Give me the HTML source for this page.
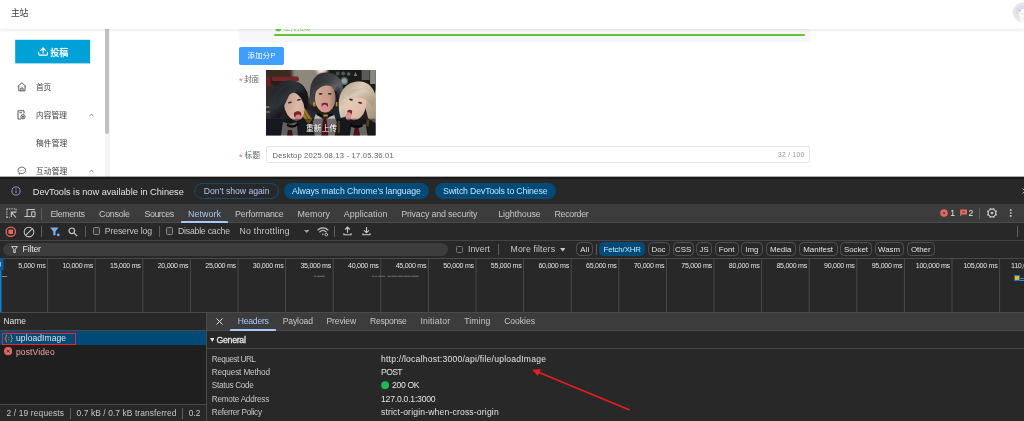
<!DOCTYPE html>
<html lang="zh-CN"><head><meta charset="utf-8"><title>主站</title>
<style>
html,body{margin:0;padding:0;}
body{width:1024px;height:421px;overflow:hidden;background:#fff;position:relative;font-family:'Liberation Sans','Noto Sans CJK SC',sans-serif;-webkit-font-smoothing:antialiased;}
#root{position:absolute;left:0;top:0;width:1024px;height:421px;overflow:hidden;will-change:transform;filter:blur(0.3px);}
#root div,#root svg{position:absolute;box-sizing:border-box;}
#root span.t{position:absolute;white-space:pre;line-height:12px;height:12px;display:block;}
</style></head><body><div id="root">
<div style="left:239px;top:20px;width:571px;height:22px;background:#f5f7fa;border-radius:0 0 3px 3px;"></div>
<div style="left:274px;top:34.2px;width:530.5px;height:1.8px;background:#67c23a;border-radius:1px;"></div>
<svg style="left:274.800px;top:24.800px" width="10" height="8" viewBox="0 0 10 8"><circle cx="3.300" cy="3.200" r="3.100" fill="#67c23a"/></svg>
<div style="left:239px;top:47px;width:44.7px;height:18px;background:#409eff;border-radius:2px;"></div>
<svg style="left:266.2px;top:70.3px" width="109.6" height="65.4" viewBox="0 0 110 65.4" preserveAspectRatio="none">
<defs>
<filter id="b1" x="-20%" y="-20%" width="140%" height="140%"><feGaussianBlur stdDeviation="0.7"/></filter>
<filter id="b2" x="-20%" y="-20%" width="140%" height="140%"><feGaussianBlur stdDeviation="0.4"/></filter>
<filter id="b3" x="-20%" y="-20%" width="140%" height="140%"><feGaussianBlur stdDeviation="1.6"/></filter>
<linearGradient id="hairL" x1="0" x2="1" y1="0" y2="1"><stop offset="0" stop-color="#1d2023"/><stop offset=".4" stop-color="#2e3438"/><stop offset=".6" stop-color="#15171a"/><stop offset="1" stop-color="#0f1012"/></linearGradient>
<linearGradient id="hairM" x1="0" x2="1" y1="0" y2="1"><stop offset="0" stop-color="#242428"/><stop offset=".4" stop-color="#404146"/><stop offset=".6" stop-color="#5f6066"/><stop offset=".8" stop-color="#36363b"/><stop offset="1" stop-color="#232327"/></linearGradient>
<linearGradient id="hairR" x1="0" x2="1" y1="0" y2="1"><stop offset="0" stop-color="#a8967e"/><stop offset=".35" stop-color="#d9cbb6"/><stop offset=".6" stop-color="#c4b199"/><stop offset="1" stop-color="#9c8a72"/></linearGradient>
<linearGradient id="skinL" x1="0" x2="1" y1="0" y2="1"><stop offset="0" stop-color="#b89484"/><stop offset=".6" stop-color="#dcb9a8"/><stop offset="1" stop-color="#c79f8f"/></linearGradient>
<linearGradient id="skinM" x1="0" x2="1" y1="0" y2="0"><stop offset="0" stop-color="#d4ab97"/><stop offset=".7" stop-color="#c59a86"/><stop offset="1" stop-color="#9a7566"/></linearGradient>
<linearGradient id="skinR" x1="0" x2="1" y1="0" y2="1"><stop offset="0" stop-color="#e9cdbd"/><stop offset=".7" stop-color="#e2bfac"/><stop offset="1" stop-color="#c9a48f"/></linearGradient>
<clipPath id="cc"><rect x="0" y="0" width="110" height="65.4"/></clipPath>
</defs>
<g clip-path="url(#cc)">
<rect width="110" height="65.4" fill="#241f1c"/>
<g filter="url(#b3)">
 <rect x="26" y="-3" width="28" height="30" fill="#8e877c"/>
 <rect x="-3" y="-3" width="30" height="12" fill="#3a2922"/>
 <rect x="-3" y="12" width="12" height="40" fill="#332c27"/>
 <rect x="60" y="-3" width="52" height="24" fill="#1d1a19"/>
 <ellipse cx="56" cy="0" rx="5" ry="4" fill="#f4ece2"/>
 <rect x="44" y="20" width="12" height="14" fill="#6d665c"/>
</g>
<g filter="url(#b1)">
 <!-- background props -->
 <rect x="6" y="6.500" width="27" height="5" rx="2" fill="#73262b"/>
 <rect x="-2" y="7" width="6.500" height="9" rx="2" fill="#6a2328"/>
 <rect x="6" y="11.500" width="24" height="3" fill="#2a1a18"/>
 <rect x="0" y="36" width="9" height="2" fill="#77726a"/><rect x="0" y="41" width="7" height="2" fill="#6a655e"/>
 <circle cx="78.500" cy="11" r="3.900" fill="#55666a"/><circle cx="78.500" cy="11" r="2.600" fill="#8fa0a2"/>
 <circle cx="72" cy="3.500" r="2" fill="#3e5054"/><circle cx="77.500" cy="3.500" r="2" fill="#4a5a5c"/><circle cx="83" cy="4" r="1.800" fill="#5a6264"/>
 <path d="M88 6l1.800-4 1.800 4z" fill="#7a7570"/>
 <rect x="96" y="-2" width="8" height="12" fill="#5b5a57"/><rect x="104.500" y="-2" width="6" height="16" fill="#8a8781"/>
 <!-- uniforms -->
 <path d="M-2 66V49C5 44 14 45 22 50l10 4 6-16 10 3 10.500 7 10.500-7 9-4 4 10 6 6c8-6 18-6 26-1V66z" fill="#262932"/>
 <path d="M68 38l8-2 3 12-6 6z" fill="#1f2633"/>
 <path d="M38 36.500l8.500 13-4 5L34 42z" fill="#a07c2c"/>
 <path d="M39.500 39l5.500 9M37.500 41l5.500 9" stroke="#5e4716" stroke-width=".9" fill="none"/>
 <path d="M72 51h2.200v12H72z" fill="#8a6d28"/><path d="M101 49l3 1-1 7-2.500-1z" fill="#8a6d28"/>
 <path d="M50 44l9 6.500 9-6.500 3 8-2 14H49l-2-14z" fill="#bcb9b6"/>
 <path d="M57 50h4l1.500 16h-7z" fill="#7d1f2a"/>
 <path d="M17 52l7 2 7-2 1 14H15z" fill="#a9a7a5"/>
 <path d="M22 60h4l1 6h-6z" fill="#6d1c26"/>
 <path d="M86 54l7 2 7-2 2 12H84z" fill="#b3b1af"/>
 <path d="M89 58h4l1.500 8h-7z" fill="#7d1f2a"/>
 <!-- left woman -->
 <path d="M5 48C0 30 6 12 22 10.500 35 9.500 43 18 42 31l-.5 9-3.500-2-5-12-14 3-5 19z" fill="url(#hairL)"/>
 <ellipse cx="28.300" cy="36.500" rx="9.800" ry="14.500" transform="rotate(-18 28.300 36.500)" fill="url(#skinL)"/>
 <path d="M9 38C7 18 30 7 41.500 22l.8 8c-4-8-11-11-19-5l-9 19z" fill="url(#hairL)"/>
 <path d="M28 43c2-2 5-2.500 7-.5 1 2 .5 4-1 5.500-2.500 1-5 0-6-2z" fill="#7a232e"/>
 <ellipse cx="32.300" cy="47.300" rx="2.900" ry="2.900" fill="#d98893"/>
 <path d="M21 53.500q6 4 11-1l.5 2.500q-6 5-11.500 1z" fill="#0c0c0e"/>
 <!-- middle woman -->
 <path d="M45.500 33C41 14 49 2.500 60 2.500c13 0 20.500 10 17 30l-2.500 8.500-3.500-20-16-4-5 20z" fill="url(#hairM)"/>
 <ellipse cx="59.500" cy="28" rx="10.300" ry="14.500" fill="url(#skinM)"/>
 <path d="M46.500 24C47 8 68 4 74.500 20l-1 6C69 13.500 57 11.500 49 23z" fill="url(#hairM)"/><path d="M70 21q5 4 5 18l-3-1z" fill="#1c1c20"/>
 <path d="M56 33.500q3-1.500 6 0l.3 3h-6.600z" fill="#6e2029"/>
 <ellipse cx="58.800" cy="38" rx="2.700" ry="3.600" fill="#dc8b97"/>
 <rect x="47.300" y="32" width="1.800" height="4.500" rx=".8" fill="#b68f30"/><rect x="70" y="32" width="1.800" height="4.500" rx=".8" fill="#b68f30"/>
 <path d="M51 43q8.500 3 17 0v2.200q-8.500 3-17 0z" fill="#0c0c0e"/>
 <rect x="57.500" y="44.500" width="4.500" height="2" fill="#b68f30"/>
 <!-- right woman -->
 <path d="M75 48C68 24 80 10 95 11.500c13 1.500 19 14 15.500 42l-8-5-6-24-14 4-2 18z" fill="url(#hairR)"/>
 <ellipse cx="90" cy="36" rx="10.300" ry="14.500" transform="rotate(14 90 36)" fill="url(#skinR)"/>
 <path d="M77 34c1-18 26-21 33-5l-3 8c-5-9-16-12-25-6z" fill="url(#hairR)"/>
 <path d="M81.500 41c1.500-1.500 4-1.500 5 0l-.5 3.500h-4z" fill="#7a2630"/>
 <ellipse cx="82.800" cy="46.300" rx="2.700" ry="4" transform="rotate(8 82.800 46.300)" fill="#df8f9b"/>
 <path d="M85 53.500q6 3 12 1v2q-6 3-12 0z" fill="#0c0c0e"/>
</g>
<g filter="url(#b2)" fill="#33282a">
 <ellipse cx="24" cy="32.500" rx="2.100" ry=".9" transform="rotate(-16 24 32.500)"/><ellipse cx="33" cy="29.800" rx="1.900" ry=".9" transform="rotate(-16 33 29.800)"/>
 <ellipse cx="54.800" cy="23.800" rx="2" ry=".9"/><ellipse cx="64" cy="23.800" rx="2" ry=".9"/>
 <ellipse cx="85.300" cy="29.600" rx="2" ry=".9" transform="rotate(14 85.300 29.600)"/><ellipse cx="94.500" cy="32.800" rx="2" ry=".9" transform="rotate(14 94.500 32.800)"/>
</g>
<rect x="0" y="48.700" width="110" height="16.700" fill="#000" fill-opacity=".42"/>
</g>
</svg>
<div style="left:266px;top:146px;width:543.5px;height:17.4px;background:#ffffff;border:1px solid #e2e5ea;border-radius:2px;"></div>
<svg style="left:15px;top:39px" width="76" height="26" viewBox="0 0 76 26"><rect x=".2" y=".8" width="74.900" height="23.600" fill="#00a1d6"/></svg>
<svg style="left:37.700px;top:47.200px" width="10.200" height="9" viewBox="0 0 10.200 9" fill="none" stroke="#fff" stroke-width="1.150" stroke-linecap="round" stroke-linejoin="round"><path d="M5.100 6V1.100M2.700 3.300l2.400-2.400 2.400 2.400M.7 5.400v1.700q0 1.100 1.100 1.100h6.600q1.100 0 1.100-1.100V5.400"/></svg>
<div style="left:105px;top:29px;width:5px;height:148px;background:#f5f5f5;"></div>
<div style="left:105.4px;top:29px;width:4px;height:104.5px;background:#c1c1c1;border-radius:0 0 2px 2px;"></div>
<svg style="left:16.600px;top:81.800px" width="9.800" height="9.800" viewBox="0 0 9.800 9.800" fill="none" stroke="#3c3e42" stroke-width=".85" stroke-linejoin="round"><path d="M.6 4.700 4.900.8l4.300 3.900M1.800 4.100v4.700h6.200V4.100M3.800 8.700V6h2.200v2.700"/></svg>
<svg style="left:17px;top:110px" width="9" height="10" viewBox="0 0 18 20" fill="none" stroke="#303133" stroke-width="1.6" stroke-linejoin="round"><path d="M2 1.5h12v6M2 1.5v16.5h6"/><path d="M5 5.5h5" /><circle cx="12" cy="13.5" r="4.2"/><circle cx="12" cy="13.5" r="1.2" fill="#303133"/></svg>
<svg style="left:88.8px;top:113px" width="5" height="4" viewBox="0 0 10 8" fill="none" stroke="#606266" stroke-width="1.3"><path d="M1 6.5 5 2l4 4.5"/></svg>
<svg style="left:17.2px;top:166px" width="9.6" height="9.6" viewBox="0 0 19.2 19.2" fill="none" stroke="#303133" stroke-width="1.5"><path d="M9.6 2.2c4.4 0 7.6 2.8 7.6 6.4s-3.2 6.4-7.6 6.4c-.8 0-1.6-.1-2.3-.3L4 16.6l.6-3.2C3 12.200 2 10.500 2 8.600c0-3.600 3.200-6.400 7.600-6.400z"/><circle cx="6.2" cy="8.700" r=".9" fill="#303133" stroke="none"/><circle cx="9.600" cy="8.700" r=".9" fill="#303133" stroke="none"/><circle cx="13" cy="8.700" r=".9" fill="#303133" stroke="none"/></svg>
<svg style="left:88.8px;top:168.6px" width="5" height="4" viewBox="0 0 10 8" fill="none" stroke="#606266" stroke-width="1.3"><path d="M1 6.5 5 2l4 4.5"/></svg>
<div style="left:0px;top:0px;width:1024px;height:28.5px;background:#ffffff;box-shadow:0 1px 3px rgba(0,21,41,.10);z-index:5;"></div>
<svg style="left:1011.5px;top:2px;z-index:6" width="13" height="21" viewBox="0 0 13 21"><circle cx="10.700" cy="10.200" r="9.500" fill="#e7e7ea" stroke="#dcdce0" stroke-width=".5"/><ellipse cx="11.300" cy="10.700" rx="5" ry="4.900" fill="#fbfbfb"/><path d="M8 15h6v4.500q-3 1-6-.5z" fill="#f6f6f7"/><path d="M3.500 9.500C4 4 9 2 13.500 3.500V7C10 6.500 8 7.500 7 10.500l-1 4.500z" fill="#dedee2"/><circle cx="8" cy="8.600" r=".75" fill="#8f96a8"/><circle cx="12.700" cy="8.600" r=".75" fill="#8f96a8"/><path d="M9.200 11.500q1.200 1 2.400 0" stroke="#b8b8c0" stroke-width=".6" fill="none"/><circle cx="7" cy="10.800" r=".9" fill="#f6dede"/></svg>
<div style="left:0px;top:177px;width:1024px;height:244px;background:#282828;"></div>
<svg style="left:0;top:176px" width="1024" height="4" viewBox="0 0 1024 4"><rect x="0" y=".65" width="1024" height="2.400" fill="#191919"/></svg>
<svg style="left:11.300px;top:185.900px" width="10" height="10" viewBox="0 0 10 10" fill="none" stroke="#a8c7fa" stroke-width="0.7"><circle cx="5" cy="5" r="4.100"/><path d="M5 4.600v2.600" stroke-width=".75"/><circle cx="5" cy="3.100" r=".5" fill="#a8c7fa" stroke="none"/></svg>
<div style="left:194.3px;top:183.3px;width:84.5px;height:15.5px;background:transparent;border:1px solid #0e4d73;border-radius:8px;"></div>
<div style="left:283.8px;top:183.3px;width:145.5px;height:15.5px;background:#004a77;border-radius:8px;"></div>
<div style="left:434.5px;top:183.3px;width:121.3px;height:15.5px;background:#004a77;border-radius:8px;"></div>
<svg style="left:1021.500px;top:187.800px" width="6" height="6" viewBox="0 0 6 6" stroke="#c7c7c7" stroke-width="0.9"><path d="M.5.5l5 5M5.500.5l-5 5"/></svg>
<div style="left:0px;top:204px;width:1024px;height:19px;background:#3c3c3c;border-bottom:1px solid #4a4a4a;"></div>
<svg style="left:5.5px;top:208px" width="11" height="11" viewBox="0 0 11 11" fill="none" stroke="#c7c7c7" stroke-width="1"><path d="M.5.9h9.800M.9.900v8.800M10 .9v3.300M.5 9.400h3.200" stroke-dasharray="1.400 1"/><path d="M5.300 8.900V4.100h4.900M5.500 4.300l4.500 5.200" stroke-width="1.100"/></svg>
<svg style="left:23.5px;top:208px" width="12" height="11" viewBox="0 0 12 11" fill="none" stroke="#c7c7c7" stroke-width="1.050"><path d="M3.100 8V1.500h7.800"/><path d="M.4 8.500h6.400"/><rect x="7.700" y="3.800" width="3.300" height="4.800" rx=".5"/></svg>
<div style="left:41px;top:207.5px;width:1px;height:12px;background:#5e5e5e;"></div>
<div style="left:181px;top:221.3px;width:46.6px;height:1.7px;background:#a8c7fa;border-radius:1px 1px 0 0;"></div>
<svg style="left:940.100px;top:208.800px" width="8" height="8" viewBox="0 0 8 8"><circle cx="4" cy="4" r="3.800" fill="#e46962"/><path d="M2.800 2.800l2.400 2.400M5.200 2.800 2.800 5.200" stroke="#3c3c3c" stroke-width=".75"/></svg>
<svg style="left:960px;top:209.400px" width="8" height="8" viewBox="0 0 8 8"><path d="M.2.500h6.800v5H2.200L.2 7.200z" fill="#e46962"/><path d="M2.600 1.900l2 2M4.600 1.900l-2 2" stroke="#3c3c3c" stroke-width=".7"/></svg>
<div style="left:979px;top:208px;width:1px;height:10.5px;background:#5e5e5e;"></div>
<svg style="left:985.900px;top:207px" width="12" height="12" viewBox="0 0 12 12" fill="none" stroke="#c7c7c7"><circle cx="6" cy="6" r="3.700" stroke-width="1.100"/><path d="M9.60 7.49L10.62 7.91M7.49 9.60L7.91 10.62M4.51 9.60L4.09 10.62M2.40 7.49L1.38 7.91M2.40 4.51L1.38 4.09M4.51 2.40L4.09 1.38M7.49 2.40L7.91 1.38M9.60 4.51L10.62 4.09" stroke-width="2.100"/><circle cx="6" cy="6" r="1.300" fill="#c7c7c7" stroke="none"/></svg>
<svg style="left:1009px;top:208px" width="4" height="10" viewBox="0 0 4 10" fill="#c7c7c7"><rect x=".9" y="1.200" width="1.700" height="1.700" rx=".3"/><rect x=".9" y="4.150" width="1.700" height="1.700" rx=".3"/><rect x=".9" y="7.100" width="1.700" height="1.700" rx=".3"/></svg>
<div style="left:0px;top:240.3px;width:1024px;height:1px;background:#444;"></div>
<svg style="left:5px;top:225.800px" width="11.500" height="11.500" viewBox="0 0 11.500 11.500"><circle cx="5.750" cy="5.750" r="4.700" fill="none" stroke="#e46962" stroke-width="1.300"/><rect x="3.450" y="3.450" width="4.600" height="4.600" rx=".7" fill="#e46962"/></svg>
<svg style="left:23.300px;top:225.500px" width="12" height="12" viewBox="0 0 12 12" fill="none" stroke="#c7c7c7" stroke-width="1.050"><circle cx="6" cy="6" r="4.850"/><path d="M2.600 9.400l6.800-6.800"/></svg>
<div style="left:41px;top:226px;width:1px;height:11px;background:#5e5e5e;"></div>
<svg style="left:50px;top:226.800px" width="11" height="10" viewBox="0 0 11 10"><path d="M.2.500h8.400L5.500 4.400v3.900H3.300V4.400z" fill="#7cacf8"/><circle cx="8.300" cy="7.900" r="1.350" fill="#7cacf8"/></svg>
<svg style="left:68px;top:226.500px" width="10" height="10" viewBox="0 0 10 10" fill="none" stroke="#c7c7c7" stroke-width="1.200"><circle cx="3.800" cy="3.800" r="2.800"/><path d="M6 6l3.200 3.200"/></svg>
<div style="left:85px;top:226px;width:1px;height:11px;background:#5e5e5e;"></div>
<div style="left:92.7px;top:227.3px;width:7.4px;height:7.4px;background:#353535;border:1px solid #8a8a8a;border-radius:1.5px;"></div>
<div style="left:159px;top:226px;width:1px;height:11px;background:#5e5e5e;"></div>
<div style="left:165.7px;top:227.3px;width:7.4px;height:7.4px;background:#353535;border:1px solid #8a8a8a;border-radius:1.5px;"></div>
<svg style="left:303.500px;top:229.900px" width="5.400" height="3" viewBox="0 0 5.400 3"><path d="M0 0h5.400L2.700 3z" fill="#a3a3a3"/></svg>
<svg style="left:316.500px;top:226px" width="12" height="11" viewBox="0 0 12 11" fill="none" stroke="#c7c7c7" stroke-width="1.100" stroke-linecap="round"><path d="M.8 4C3.800 1.100 8 1.100 11 4M2.700 6c2-1.900 4.500-1.900 6.400 0"/><circle cx="5.800" cy="8.300" r=".8" fill="#c7c7c7" stroke="none"/><circle cx="9.300" cy="8.600" r="1.300" stroke-width=".9"/></svg>
<div style="left:334px;top:226px;width:1px;height:11px;background:#5e5e5e;"></div>
<svg style="left:342.700px;top:226.300px" width="9" height="10" viewBox="0 0 9 10" fill="none" stroke="#c7c7c7" stroke-width="1.100"><path d="M4.500 6.800V1.200M2.100 3.500l2.400-2.400 2.400 2.400M.9 7.300v1.500h7.200V7.300"/></svg>
<svg style="left:361.500px;top:226.300px" width="9" height="10" viewBox="0 0 9 10" fill="none" stroke="#c7c7c7" stroke-width="1.100"><path d="M4.500 1v5.600M2.100 4.300l2.400 2.400 2.400-2.400M.9 7.300v1.500h7.200V7.300"/></svg>
<div style="left:1017px;top:226px;width:1px;height:11px;background:#5e5e5e;"></div>
<div style="left:3.3px;top:242.7px;width:444.7px;height:13.4px;background:#3c3c3c;border-radius:7px;"></div>
<svg style="left:10.500px;top:245.800px" width="7" height="7.500" viewBox="0 0 7 7.500" fill="none" stroke="#e3e3e3" stroke-width=".9"><path d="M.6.6h5.800L4.200 3.400v3.200H2.800V3.400z"/></svg>
<div style="left:455.5px;top:245.5px;width:7.5px;height:7.5px;background:transparent;border:1px solid #757575;border-radius:1.500px;"></div>
<div style="left:498px;top:244px;width:1px;height:11px;background:#5e5e5e;"></div>
<svg style="left:559.500px;top:248px" width="5.500" height="3.500" viewBox="0 0 5.500 3.500"><path d="M0 0h5.500L2.750 3.500z" fill="#c7c7c7"/></svg>
<div style="left:576.25px;top:242.4px;width:17.0px;height:13.6px;background:transparent;border:1px solid #515151;border-radius:4.5px;"></div>
<div style="left:647.5px;top:242.4px;width:22.0px;height:13.6px;background:transparent;border:1px solid #515151;border-radius:4.5px;"></div>
<div style="left:672.5px;top:242.4px;width:21.25px;height:13.6px;background:transparent;border:1px solid #515151;border-radius:4.5px;"></div>
<div style="left:696.25px;top:242.4px;width:15.75px;height:13.6px;background:transparent;border:1px solid #515151;border-radius:4.5px;"></div>
<div style="left:714.5px;top:242.4px;width:24.25px;height:13.6px;background:transparent;border:1px solid #515151;border-radius:4.5px;"></div>
<div style="left:741.25px;top:242.4px;width:21.25px;height:13.6px;background:transparent;border:1px solid #515151;border-radius:4.5px;"></div>
<div style="left:765.5px;top:242.4px;width:30.25px;height:13.6px;background:transparent;border:1px solid #515151;border-radius:4.5px;"></div>
<div style="left:798.75px;top:242.4px;width:38.75px;height:13.6px;background:transparent;border:1px solid #515151;border-radius:4.5px;"></div>
<div style="left:840.25px;top:242.4px;width:31.5px;height:13.6px;background:transparent;border:1px solid #515151;border-radius:4.5px;"></div>
<div style="left:874.5px;top:242.4px;width:29.25px;height:13.6px;background:transparent;border:1px solid #515151;border-radius:4.5px;"></div>
<div style="left:906.5px;top:242.4px;width:28.5px;height:13.6px;background:transparent;border:1px solid #515151;border-radius:4.5px;"></div>
<div style="left:596px;top:244px;width:1px;height:11px;background:#5e5e5e;"></div>
<div style="left:599.25px;top:242.4px;width:45.75px;height:13.6px;background:#004a77;border-radius:4.5px;"></div>
<div style="left:0px;top:258px;width:1024px;height:1px;background:#4a4a4a;"></div>
<div style="left:0px;top:312px;width:1024px;height:1px;background:#4a4a4a;"></div>
<svg style="left:0;top:259px" width="1024" height="53" viewBox="0 0 1024 53" fill="#494949"><rect x="47.10" y="0" width="1" height="53"/><rect x="94.70" y="0" width="1" height="53"/><rect x="142.30" y="0" width="1" height="53"/><rect x="189.90" y="0" width="1" height="53"/><rect x="237.50" y="0" width="1" height="53"/><rect x="285.10" y="0" width="1" height="53"/><rect x="332.70" y="0" width="1" height="53"/><rect x="380.30" y="0" width="1" height="53"/><rect x="427.90" y="0" width="1" height="53"/><rect x="475.50" y="0" width="1" height="53"/><rect x="523.10" y="0" width="1" height="53"/><rect x="570.70" y="0" width="1" height="53"/><rect x="618.30" y="0" width="1" height="53"/><rect x="665.90" y="0" width="1" height="53"/><rect x="713.50" y="0" width="1" height="53"/><rect x="761.10" y="0" width="1" height="53"/><rect x="808.70" y="0" width="1" height="53"/><rect x="856.30" y="0" width="1" height="53"/><rect x="903.90" y="0" width="1" height="53"/><rect x="951.50" y="0" width="1" height="53"/><rect x="999.10" y="0" width="1" height="53"/><rect x="1046.70" y="0" width="1" height="53"/></svg>
<svg style="left:0;top:258px" width="5" height="54" viewBox="0 0 5 54"><rect x="0" y="0" width="1.500" height="54" fill="#0d7fd2"/><path d="M0 0h2.200q1.300 0 1.300 1.300v9.700q0 1.300-1.300 1.300H0z" fill="#0a5c99"/><rect x="0" y="4" width="1" height="4.500" fill="#8ab8e6"/></svg>
<div style="left:1.5px;top:276px;width:5px;height:1px;background:#8a8a8a;"></div>
<svg style="left:0;top:274px" width="430" height="5" viewBox="0 0 430 5" fill="#616161"><rect x="314.1" y="1.650" width="1.90" height="1.300"/><rect x="316.8" y="1.650" width="7.90" height="1.300"/><rect x="371.8" y="1.650" width="2.70" height="1.300"/><rect x="375.3" y="1.650" width="1.70" height="1.300"/><rect x="378" y="1.650" width="7.00" height="1.300"/><rect x="387.6" y="1.650" width="3.40" height="1.300"/><rect x="391.6" y="1.650" width="5.40" height="1.300"/><rect x="397.6" y="1.650" width="5.40" height="1.300"/><rect x="403.6" y="1.650" width="6.90" height="1.300"/><rect x="411.3" y="1.650" width="7.40" height="1.300"/></svg>
<div style="left:1014px;top:275px;width:6px;height:6px;background:#1a73c8;"></div>
<div style="left:1015.3px;top:276px;width:3.5px;height:3.5px;background:#f2b600;"></div>
<div style="left:1020px;top:277.5px;width:4px;height:1px;background:#3b82f6;"></div>
<div style="left:1020px;top:279.5px;width:4px;height:1px;background:#3b82f6;"></div>
<div style="left:0px;top:313px;width:206px;height:18px;background:#282828;border-bottom:1px solid #4a4a4a;"></div>
<div style="left:0px;top:331px;width:206px;height:73.5px;background:#1f1f1f;"></div>
<div style="left:0px;top:331px;width:206px;height:14px;background:#004a77;"></div>
<div style="left:2px;top:333px;width:74px;height:12px;background:transparent;border:1px solid #f0222c;"></div>
<svg style="left:3.500px;top:333.800px" width="9.500" height="9" viewBox="0 0 9.500 9" fill="none" stroke="#f09a32" stroke-width=".9"><path d="M3 .8C1.800 .8 2.200 2.200 2 3.300 1.900 4 1.200 4.500.8 4.500c.4 0 1.100.5 1.200 1.200C2.200 6.800 1.800 8.200 3 8.200M6.500.8c1.200 0 .8 1.400 1 2.500.1.700.8 1.200 1.200 1.200-.4 0-1.100.5-1.200 1.200-.2 1.100.2 2.500-1 2.500"/><circle cx="4.750" cy="3.200" r=".5" fill="#f09a32" stroke="none"/><circle cx="4.750" cy="5.800" r=".5" fill="#f09a32" stroke="none"/></svg>
<svg style="left:3.900px;top:347.400px" width="8.400" height="8.400" viewBox="0 0 8 8"><circle cx="4" cy="4" r="3.900" fill="#e46962"/><path d="M2.700 2.700l2.600 2.600M5.300 2.700 2.700 5.300" stroke="#1f1f1f" stroke-width=".8"/></svg>
<div style="left:0px;top:404px;width:206px;height:17px;background:#282828;border-top:1px solid #4a4a4a;"></div>
<div style="left:70px;top:407.5px;width:1px;height:11px;background:#5e5e5e;"></div>
<div style="left:182px;top:407.5px;width:1px;height:11px;background:#5e5e5e;"></div>
<div style="left:206px;top:313px;width:1px;height:108px;background:#4a4a4a;"></div>
<div style="left:207px;top:313px;width:817px;height:18px;background:#3c3c3c;border-bottom:1px solid #4a4a4a;"></div>
<svg style="left:216px;top:318.300px" width="7" height="7" viewBox="0 0 7 7" stroke="#e3e3e3" stroke-width="1"><path d="M.5.5l6 6M6.500.5l-6 6"/></svg>
<div style="left:230.3px;top:329.3px;width:45.5px;height:1.7px;background:#a8c7fa;border-radius:1px 1px 0 0;"></div>
<div style="left:207px;top:348px;width:817px;height:1px;background:#4a4a4a;"></div>
<svg style="left:209.800px;top:338.300px" width="4.500" height="4" viewBox="0 0 4.500 4"><path d="M0 0h4.500L2.250 4z" fill="#e3e3e3"/></svg>
<svg style="left:381px;top:381.200px" width="8.400" height="8.400" viewBox="0 0 8 8"><circle cx="4" cy="4" r="3.800" fill="#1db954"/></svg>
<span class="t" id="t0" style="left:284.00px;top:22px;font-size:6.6px;color:#80cc58;letter-spacing:-0.192px;">上传完成</span>
<span class="t" id="t1" style="left:247.40px;top:50px;font-size:7.2px;color:#ffffff;letter-spacing:0.547px;">添加分P</span>
<span class="t" id="t2" style="left:306.00px;top:123px;font-size:7.7px;color:#ffffff;letter-spacing:0.145px;">重新上传</span>
<span class="t" id="t3" style="left:238.90px;top:75px;font-size:9px;color:#f56c6c;">*</span>
<span class="t" id="t4" style="left:244.30px;top:74px;font-size:7.6px;color:#606266;letter-spacing:-0.288px;">封面</span>
<span class="t" id="t5" style="left:238.90px;top:151px;font-size:9px;color:#f56c6c;">*</span>
<span class="t" id="t6" style="left:244.50px;top:150px;font-size:7.6px;color:#606266;letter-spacing:0.312px;">标题</span>
<span class="t" id="t7" style="left:272.50px;top:150px;font-size:7.6px;color:#606266;letter-spacing:0.207px;">Desktop 2025.08.13 - 17.05.36.01</span>
<span class="t" id="t8" style="left:778.00px;top:149px;font-size:6.7px;color:#909399;letter-spacing:0.304px;">32 / 100</span>
<span class="t" id="t9" style="left:50.30px;top:47px;font-size:9px;color:#ffffff;font-weight:700;letter-spacing:-0.016px;">投稿</span>
<span class="t" id="t10" style="left:36.10px;top:82px;font-size:7.7px;color:#3c3e42;letter-spacing:-0.391px;">首页</span>
<span class="t" id="t11" style="left:35.90px;top:110px;font-size:7.7px;color:#3c3e42;letter-spacing:0.111px;">内容管理</span>
<span class="t" id="t12" style="left:36.00px;top:138px;font-size:7.7px;color:#3c3e42;letter-spacing:0.145px;">稿件管理</span>
<span class="t" id="t13" style="left:36.00px;top:166px;font-size:7.7px;color:#3c3e42;letter-spacing:0.145px;">互动管理</span>
<span class="t" id="t14" style="left:11.00px;top:7px;font-size:8.8px;color:#3c3e42;letter-spacing:-0.309px;z-index:6;">主站</span>
<span class="t" id="t15" style="left:32.80px;top:186px;font-size:9.2px;color:#e3e3e3;letter-spacing:-0.005px;">DevTools is now available in Chinese</span>
<span class="t" id="t16" style="left:203.75px;top:185px;font-size:8.7px;color:#a8c7fa;letter-spacing:-0.042px;">Don't show again</span>
<span class="t" id="t17" style="left:292.00px;top:185px;font-size:8.7px;color:#c2e7ff;letter-spacing:-0.080px;">Always match Chrome's language</span>
<span class="t" id="t18" style="left:443.00px;top:185px;font-size:8.7px;color:#c2e7ff;letter-spacing:-0.128px;">Switch DevTools to Chinese</span>
<span class="t" id="t19" style="left:50.50px;top:208px;font-size:8.9px;color:#c7c7c7;letter-spacing:-0.357px;">Elements</span>
<span class="t" id="t20" style="left:99.00px;top:208px;font-size:8.9px;color:#c7c7c7;letter-spacing:-0.260px;">Console</span>
<span class="t" id="t21" style="left:144.50px;top:208px;font-size:8.9px;color:#c7c7c7;letter-spacing:-0.477px;">Sources</span>
<span class="t" id="t22" style="left:235.00px;top:208px;font-size:8.9px;color:#c7c7c7;letter-spacing:-0.201px;">Performance</span>
<span class="t" id="t23" style="left:297.50px;top:208px;font-size:8.9px;color:#c7c7c7;letter-spacing:0.087px;">Memory</span>
<span class="t" id="t24" style="left:343.75px;top:208px;font-size:8.9px;color:#c7c7c7;letter-spacing:0.033px;">Application</span>
<span class="t" id="t25" style="left:401.25px;top:208px;font-size:8.9px;color:#c7c7c7;letter-spacing:-0.167px;">Privacy and security</span>
<span class="t" id="t26" style="left:498.25px;top:208px;font-size:8.9px;color:#c7c7c7;letter-spacing:-0.104px;">Lighthouse</span>
<span class="t" id="t27" style="left:554.50px;top:208px;font-size:8.9px;color:#c7c7c7;letter-spacing:-0.324px;">Recorder</span>
<span class="t" id="t28" style="left:188.00px;top:208px;font-size:8.9px;color:#a8c7fa;letter-spacing:0.073px;">Network</span>
<span class="t" id="t29" style="left:950.30px;top:207px;font-size:8.6px;color:#e3e3e3;">1</span>
<span class="t" id="t30" style="left:968.60px;top:207px;font-size:8.6px;color:#e3e3e3;">2</span>
<span class="t" id="t31" style="left:104.80px;top:225px;font-size:8.7px;color:#c7c7c7;letter-spacing:-0.135px;">Preserve log</span>
<span class="t" id="t32" style="left:178.00px;top:225px;font-size:8.7px;color:#c7c7c7;letter-spacing:-0.215px;">Disable cache</span>
<span class="t" id="t33" style="left:239.50px;top:225px;font-size:8.7px;color:#c7c7c7;letter-spacing:0.263px;">No throttling</span>
<span class="t" id="t34" style="left:22.50px;top:243px;font-size:8.7px;color:#e3e3e3;letter-spacing:-0.163px;">Filter</span>
<span class="t" id="t35" style="left:468.00px;top:243px;font-size:8.7px;color:#c7c7c7;letter-spacing:0.053px;">Invert</span>
<span class="t" id="t36" style="left:510.50px;top:243px;font-size:8.7px;color:#c7c7c7;letter-spacing:0.139px;">More filters</span>
<span class="t" id="t37" style="left:580.36px;top:244px;font-size:7.9px;color:#e3e3e3;">All</span>
<span class="t" id="t38" style="left:651.48px;top:244px;font-size:7.9px;color:#e3e3e3;">Doc</span>
<span class="t" id="t39" style="left:675.01px;top:244px;font-size:7.9px;color:#e3e3e3;">CSS</span>
<span class="t" id="t40" style="left:699.52px;top:244px;font-size:7.9px;color:#e3e3e3;">JS</span>
<span class="t" id="t41" style="left:718.73px;top:244px;font-size:7.9px;color:#e3e3e3;">Font</span>
<span class="t" id="t42" style="left:745.30px;top:244px;font-size:7.9px;color:#e3e3e3;">Img</span>
<span class="t" id="t43" style="left:769.88px;top:244px;font-size:7.9px;color:#e3e3e3;">Media</span>
<span class="t" id="t44" style="left:803.21px;top:244px;font-size:7.9px;color:#e3e3e3;">Manifest</span>
<span class="t" id="t45" style="left:843.94px;top:244px;font-size:7.9px;color:#e3e3e3;">Socket</span>
<span class="t" id="t46" style="left:878.09px;top:244px;font-size:7.9px;color:#e3e3e3;">Wasm</span>
<span class="t" id="t47" style="left:910.88px;top:244px;font-size:7.9px;color:#e3e3e3;">Other</span>
<span class="t" id="t48" style="left:603.60px;top:244px;font-size:7.9px;color:#c2e7ff;letter-spacing:-0.149px;">Fetch/XHR</span>
<span class="t" id="t49" style="left:18.26px;top:260px;font-size:7.1px;color:#e3e3e3;letter-spacing:-0.250px;">5,000 ms</span>
<span class="t" id="t50" style="left:62.43px;top:260px;font-size:7.1px;color:#e3e3e3;letter-spacing:-0.282px;">10,000 ms</span>
<span class="t" id="t51" style="left:110.03px;top:260px;font-size:7.1px;color:#e3e3e3;letter-spacing:-0.282px;">15,000 ms</span>
<span class="t" id="t52" style="left:157.63px;top:260px;font-size:7.1px;color:#e3e3e3;letter-spacing:-0.282px;">20,000 ms</span>
<span class="t" id="t53" style="left:205.23px;top:260px;font-size:7.1px;color:#e3e3e3;letter-spacing:-0.282px;">25,000 ms</span>
<span class="t" id="t54" style="left:252.83px;top:260px;font-size:7.1px;color:#e3e3e3;letter-spacing:-0.282px;">30,000 ms</span>
<span class="t" id="t55" style="left:300.43px;top:260px;font-size:7.1px;color:#e3e3e3;letter-spacing:-0.282px;">35,000 ms</span>
<span class="t" id="t56" style="left:348.03px;top:260px;font-size:7.1px;color:#e3e3e3;letter-spacing:-0.282px;">40,000 ms</span>
<span class="t" id="t57" style="left:395.63px;top:260px;font-size:7.1px;color:#e3e3e3;letter-spacing:-0.282px;">45,000 ms</span>
<span class="t" id="t58" style="left:443.23px;top:260px;font-size:7.1px;color:#e3e3e3;letter-spacing:-0.282px;">50,000 ms</span>
<span class="t" id="t59" style="left:490.83px;top:260px;font-size:7.1px;color:#e3e3e3;letter-spacing:-0.282px;">55,000 ms</span>
<span class="t" id="t60" style="left:538.43px;top:260px;font-size:7.1px;color:#e3e3e3;letter-spacing:-0.282px;">60,000 ms</span>
<span class="t" id="t61" style="left:586.03px;top:260px;font-size:7.1px;color:#e3e3e3;letter-spacing:-0.282px;">65,000 ms</span>
<span class="t" id="t62" style="left:633.63px;top:260px;font-size:7.1px;color:#e3e3e3;letter-spacing:-0.282px;">70,000 ms</span>
<span class="t" id="t63" style="left:681.23px;top:260px;font-size:7.1px;color:#e3e3e3;letter-spacing:-0.282px;">75,000 ms</span>
<span class="t" id="t64" style="left:728.83px;top:260px;font-size:7.1px;color:#e3e3e3;letter-spacing:-0.282px;">80,000 ms</span>
<span class="t" id="t65" style="left:776.43px;top:260px;font-size:7.1px;color:#e3e3e3;letter-spacing:-0.282px;">85,000 ms</span>
<span class="t" id="t66" style="left:824.03px;top:260px;font-size:7.1px;color:#e3e3e3;letter-spacing:-0.282px;">90,000 ms</span>
<span class="t" id="t67" style="left:871.63px;top:260px;font-size:7.1px;color:#e3e3e3;letter-spacing:-0.282px;">95,000 ms</span>
<span class="t" id="t68" style="left:915.80px;top:260px;font-size:7.1px;color:#e3e3e3;letter-spacing:-0.309px;">100,000 ms</span>
<span class="t" id="t69" style="left:963.40px;top:260px;font-size:7.1px;color:#e3e3e3;letter-spacing:-0.309px;">105,000 ms</span>
<span class="t" id="t70" style="left:1011.00px;top:260px;font-size:7.1px;color:#e3e3e3;letter-spacing:-0.250px;">110,000 ms</span>
<span class="t" id="t71" style="left:3.40px;top:315px;font-size:8.5px;color:#e3e3e3;letter-spacing:-0.029px;">Name</span>
<span class="t" id="t72" style="left:16.00px;top:332px;font-size:8.5px;color:#e3e3e3;letter-spacing:0.094px;">uploadImage</span>
<span class="t" id="t73" style="left:16.00px;top:346px;font-size:8.5px;color:#f0a49c;letter-spacing:0.130px;">postVideo</span>
<span class="t" id="t74" style="left:6.60px;top:407px;font-size:8.4px;color:#c7c7c7;letter-spacing:0.142px;">2 / 19 requests</span>
<span class="t" id="t75" style="left:76.60px;top:407px;font-size:8.4px;color:#c7c7c7;letter-spacing:0.096px;">0.7 kB / 0.7 kB transferred</span>
<span class="t" id="t76" style="left:188.80px;top:407px;font-size:8.4px;color:#c7c7c7;letter-spacing:-0.078px;">0.2</span>
<span class="t" id="t77" style="left:237.70px;top:315px;font-size:8.6px;color:#a8c7fa;letter-spacing:-0.214px;">Headers</span>
<span class="t" id="t78" style="left:282.70px;top:315px;font-size:8.6px;color:#c7c7c7;letter-spacing:-0.127px;">Payload</span>
<span class="t" id="t79" style="left:326.50px;top:315px;font-size:8.6px;color:#c7c7c7;letter-spacing:-0.146px;">Preview</span>
<span class="t" id="t80" style="left:370.00px;top:315px;font-size:8.6px;color:#c7c7c7;letter-spacing:-0.286px;">Response</span>
<span class="t" id="t81" style="left:420.40px;top:315px;font-size:8.6px;color:#c7c7c7;letter-spacing:0.202px;">Initiator</span>
<span class="t" id="t82" style="left:464.20px;top:315px;font-size:8.6px;color:#c7c7c7;letter-spacing:0.146px;">Timing</span>
<span class="t" id="t83" style="left:504.20px;top:315px;font-size:8.6px;color:#c7c7c7;letter-spacing:-0.044px;">Cookies</span>
<span class="t" id="t84" style="left:216.50px;top:334px;font-size:8.8px;color:#e3e3e3;letter-spacing:-0.316px;-webkit-text-stroke:0.3px #e3e3e3;">General</span>
<span class="t" id="t85" style="left:211.75px;top:354px;font-size:8.2px;color:#c7c7c7;letter-spacing:-0.501px;">Request URL</span>
<span class="t" id="t86" style="left:381.00px;top:353px;font-size:8.6px;color:#e3e3e3;letter-spacing:0.214px;">http://localhost:3000/api/file/uploadImage</span>
<span class="t" id="t87" style="left:211.75px;top:367px;font-size:8.2px;color:#c7c7c7;letter-spacing:-0.142px;">Request Method</span>
<span class="t" id="t88" style="left:381.00px;top:366px;font-size:8.6px;color:#e3e3e3;letter-spacing:-0.600px;">POST</span>
<span class="t" id="t89" style="left:211.75px;top:380px;font-size:8.2px;color:#c7c7c7;letter-spacing:-0.291px;">Status Code</span>
<span class="t" id="t90" style="left:392.00px;top:379px;font-size:8.6px;color:#e3e3e3;letter-spacing:-0.331px;">200 OK</span>
<span class="t" id="t91" style="left:211.75px;top:394px;font-size:8.2px;color:#c7c7c7;letter-spacing:-0.229px;">Remote Address</span>
<span class="t" id="t92" style="left:381.00px;top:393px;font-size:8.6px;color:#e3e3e3;letter-spacing:-0.212px;">127.0.0.1:3000</span>
<span class="t" id="t93" style="left:211.75px;top:407px;font-size:8.2px;color:#c7c7c7;letter-spacing:-0.279px;">Referrer Policy</span>
<span class="t" id="t94" style="left:381.00px;top:406px;font-size:8.6px;color:#e3e3e3;letter-spacing:0.167px;">strict-origin-when-cross-origin</span>
<svg style="left:520px;top:360px" width="120" height="60" viewBox="520 360 120 60"><path d="M629.700 410 538.500 372.300" stroke="#ec1c24" stroke-width="1.700" fill="none"/><path d="M532.300 369.700l8.700-.4-3.200 6.600z" fill="#ec1c24"/></svg>
</div></body></html>
